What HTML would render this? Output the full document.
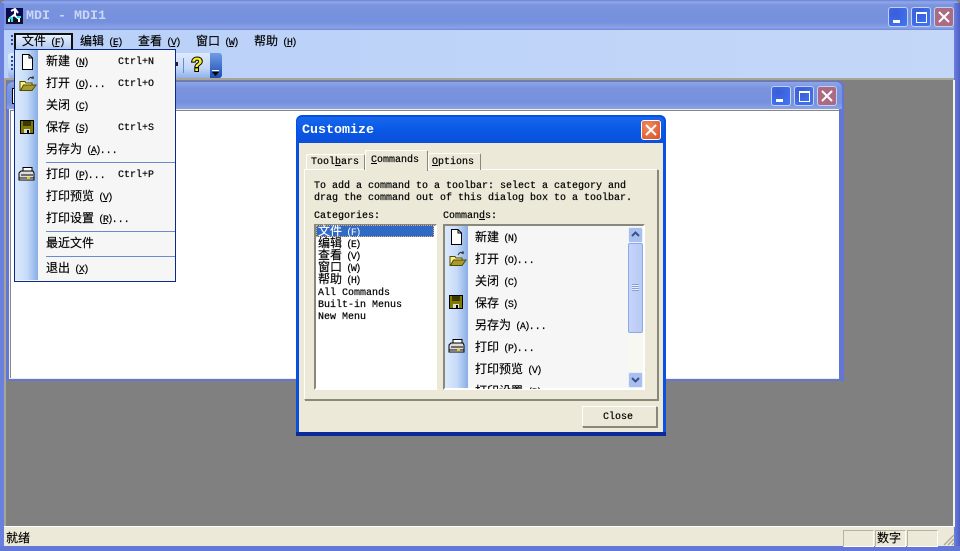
<!DOCTYPE html>
<html><head><meta charset="utf-8"><title>MDI</title>
<style>
html,body{margin:0;padding:0}
body{width:960px;height:551px;overflow:hidden;position:relative;background:#808080;font:10px/14px "Liberation Mono",monospace;color:#000;-webkit-text-stroke:.2px}
div,span,svg{position:absolute}
span{white-space:pre}
b{font:12px/14px "WenQuanYi Zen Hei","Noto Sans CJK SC",sans-serif;-webkit-text-stroke:.15px}
u{text-decoration:underline}
a{letter-spacing:-1.6px}
.t{font:bold 13.33px/14px "Liberation Mono",monospace;-webkit-text-stroke:0}
</style></head><body>
<svg width="0" height="0" style="position:absolute"><defs>
<g id="new"><path d="M3.5 .5H10L13.5 4V15.5H3.5Z" fill="#fff" stroke="#000"/><path d="M10 .5V4H13.5" fill="none" stroke="#000"/></g>
<g id="open"><path d="M1 5.500H6L7 7H13V14.500H1Z" fill="#ffef8a" stroke="#4f4a00"/><path d="M1.500 14.500L4.500 9H17L13 14.500Z" fill="#a89a2c" stroke="#4f4a00"/><path d="M9 4Q11 0 14 2M14 3V0M15 2H12" fill="none" stroke="#333"/></g>
<g id="save"><path d="M.5 .5H13.500V13.500H.5Z" fill="#807c00" stroke="#000"/><path d="M3 1H11V6H3Z" fill="#3a3800"/><path d="M4 9H10V13H4Z" fill="#ddd"/><path d="M7 10H9V13H7Z" fill="#000"/></g>
<g id="print"><path d="M5 .5H14V5H5Z" fill="#fff" stroke="#000"/><path d="M1 6L3 4H15L16 6V11H1Z" fill="#ddd" stroke="#000"/><path d="M1 11H16V13H1Z" fill="#fff" stroke="#000"/><path d="M3 8H15" stroke="#000"/><path d="M9 11H12" stroke="#e8d000" stroke-width="2"/></g>
</defs></svg>

<!-- main window frame -->
<div style="left:0;top:0;width:960px;height:551px;border-radius:7px 7px 0 0;background:#6a7edc"></div>
<div style="left:0;top:0;width:960px;height:30px;border-radius:7px 7px 0 0;background:linear-gradient(#6b80d8 0,#8fa8ea 2px,#7a94de 5px,#7590dd 22px,#8aa2e6 28px,#6f86dc 30px)"></div>
<div style="left:954px;top:3px;width:6px;height:548px;background:linear-gradient(90deg,#6a7edc,#4f5fc4)"></div>
<div style="left:0;top:3px;width:4px;height:548px;background:#6a80de"></div>
<div style="left:0;top:546px;width:960px;height:5px;background:#6377d8"></div>
<div style="left:5px;top:80px;width:949px;height:447px;background:#808080"></div>

<!-- app icon -->
<svg style="left:6px;top:8px" width="17" height="16"><rect width="17" height="16" fill="#0a0a50"/><rect y="8" width="17" height="8" fill="#101030"/><path d="M5 3L9 1L12 5M9 1V8M3 11L8 7L13 11M3 11V14M13 9V14" stroke="#fff" stroke-width="2" fill="none"/><path d="M3 10H6V14M11 9H15" stroke="#20e8e8" stroke-width="2" fill="none"/></svg>
<span class="t" style="left:26px;top:10px;color:#c9d6f6">MDI - MDI1</span>

<!-- window buttons -->
<div style="left:888px;top:7px;width:18px;height:18px;border:1px solid #c3d0f2;border-radius:3px;background:radial-gradient(circle at 35% 30%,#3a5cd8,#3f72ee 80%)"><div style="left:4px;top:12px;width:7px;height:3px;background:#fff"></div></div>
<div style="left:911px;top:7px;width:18px;height:18px;border:1px solid #c3d0f2;border-radius:3px;background:radial-gradient(circle at 35% 30%,#3a5cd8,#3f72ee 80%)"><div style="left:4px;top:4px;width:9px;height:8px;border:1px solid #fff;border-top:2px solid #fff"></div></div>
<div style="left:934px;top:7px;width:18px;height:18px;border:1px solid #c3d0f2;border-radius:3px;background:#ab6b83"><svg style="left:3px;top:3px" width="12" height="12"><path d="M1 1L11 11M11 1L1 11" stroke="#fff" stroke-width="2"/></svg></div>

<!-- menu/toolbar area -->
<div style="left:4px;top:30px;width:950px;height:49px;background:linear-gradient(90deg,#b9d0f8,#c3d7f8)"></div>
<div style="left:4px;top:78px;width:950px;height:2px;background:#a7a595"></div>
<div style="left:11px;top:35px;width:2px;height:12px;background:repeating-linear-gradient(#274a9a 0 2px,transparent 2px 4px)"></div>
<span style="left:80px;top:34px"><b>编辑</b><a> (<u>E</u>)</a></span>
<span style="left:138px;top:34px"><b>查看</b><a> (<u>V</u>)</a></span>
<span style="left:196px;top:34px"><b>窗口</b><a> (<u>W</u>)</a></span>
<span style="left:254px;top:34px"><b>帮助</b><a> (<u>H</u>)</a></span>

<div style="left:8px;top:53px;width:202px;height:25px;border-radius:3px 0 0 3px;background:linear-gradient(#dfeafc,#c3d7f8 60%,#8fb0ea)"></div>
<div style="left:11px;top:56px;width:2px;height:15px;background:repeating-linear-gradient(#274a9a 0 2px,transparent 2px 4px)"></div>
<div style="left:176px;top:62px;width:2px;height:4px;background:#222"></div>
<div style="left:183px;top:58px;width:1px;height:15px;background:#6a8ccc"></div>
<svg style="left:188px;top:55px" width="18" height="20"><text x="9" y="16" text-anchor="middle" font-family="Liberation Sans" font-weight="bold" font-size="19" fill="#f7ef20" stroke="#000" stroke-width="2" paint-order="stroke">?</text></svg>
<div style="left:210px;top:53px;width:12px;height:25px;border-radius:0 3px 3px 0;background:linear-gradient(#6f9ce6,#1e4cb0)"><div style="left:2px;top:17px;width:7px;height:1px;background:#fff"></div><svg style="left:2px;top:19px" width="7" height="4"><path d="M0 0H7L3.500 4Z" fill="#000"/></svg></div>

<!-- MDI area -->
<div style="left:4px;top:80px;width:2px;height:447px;background:#a7a595"></div>
<div style="left:953px;top:80px;width:2px;height:447px;background:#f4f2e6"></div>

<!-- MDI child -->
<div style="left:6px;top:81px;width:838px;height:300px;border-radius:6px 6px 0 0;background:#6376d8"></div>
<div style="left:7px;top:82px;width:835px;height:27px;border-radius:6px 6px 0 0;background:linear-gradient(#8ea6ea,#7b94df 6px,#7590dd 20px,#8aa2e6)"></div>
<div style="left:12px;top:88px;width:4px;height:14px;background:#fff;border:1px solid #000"></div>
<div style="left:9px;top:109px;width:830px;height:270px;background:#f0eee2"></div>
<div style="left:10px;top:110px;width:828px;height:267px;background:#fff;border-left:1px solid #888;border-top:1px solid #888"></div>
<div style="left:771px;top:86px;width:18px;height:18px;border:1px solid #c3d0f2;border-radius:3px;background:radial-gradient(circle at 35% 30%,#3a5cd8,#3f72ee 80%)"><div style="left:4px;top:12px;width:7px;height:3px;background:#fff"></div></div>
<div style="left:794px;top:86px;width:18px;height:18px;border:1px solid #c3d0f2;border-radius:3px;background:radial-gradient(circle at 35% 30%,#3a5cd8,#3f72ee 80%)"><div style="left:4px;top:4px;width:9px;height:8px;border:1px solid #fff;border-top:2px solid #fff"></div></div>
<div style="left:817px;top:86px;width:18px;height:18px;border:1px solid #c3d0f2;border-radius:3px;background:#ab6b83"><svg style="left:3px;top:3px" width="12" height="12"><path d="M1 1L11 11M11 1L1 11" stroke="#fff" stroke-width="2"/></svg></div>

<!-- status bar -->
<div style="left:4px;top:526px;width:950px;height:20px;background:#ece9d8;border-top:1px solid #fff;box-sizing:border-box"></div>
<span style="left:6px;top:531px"><b>就绪</b></span>
<div style="left:843px;top:530px;width:29px;height:15px;border:1px solid;border-color:#b5b2a2 #fff #fff #b5b2a2"></div>
<div style="left:875px;top:530px;width:29px;height:15px;border:1px solid;border-color:#b5b2a2 #fff #fff #b5b2a2"></div>
<span style="left:877px;top:531px"><b>数字</b></span>
<div style="left:907px;top:530px;width:29px;height:15px;border:1px solid;border-color:#b5b2a2 #fff #fff #b5b2a2"></div>
<svg style="left:943px;top:534px" width="12" height="12"><path d="M11 1L1 11M11 5L5 11M11 9L9 11" stroke="#aca899" stroke-width="1.300"/></svg>

<!-- Menu bar highlighted item -->
<div style="left:14px;top:33px;width:55px;height:16px;border:2px solid #111;border-bottom:0;background:linear-gradient(#e8f0fd,#a9c4f0)"></div>
<span style="left:22px;top:34px"><b>文件</b><a> (<u>F</u>)</a></span>

<!-- Drop menu -->
<div style="left:14px;top:49px;width:160px;height:231px;border:1px solid #0a2a8a;background:#f6f6f6"></div>
<div style="left:15px;top:50px;width:23px;height:230px;background:linear-gradient(90deg,#dbe9fc,#c8dcf8 50%,#88aee6)"></div>
<div style="left:46px;top:162px;width:129px;height:1px;background:#6a8ccc"></div>
<div style="left:46px;top:231px;width:129px;height:1px;background:#6a8ccc"></div>
<div style="left:46px;top:256px;width:129px;height:1px;background:#6a8ccc"></div>
<svg style="left:19px;top:54px" width="18" height="16"><use href="#new"/></svg>
<svg style="left:19px;top:76px" width="18" height="16"><use href="#open"/></svg>
<svg style="left:20px;top:120px" width="16" height="16"><use href="#save"/></svg>
<svg style="left:18px;top:167px" width="18" height="16"><use href="#print"/></svg>
<span style="left:46px;top:54px"><b>新建</b><a> (<u>N</u>)</a></span><span style="left:118px;top:56px">Ctrl+N</span>
<span style="left:46px;top:76px"><b>打开</b><a> (<u>O</u>)</a>...</span><span style="left:118px;top:78px">Ctrl+O</span>
<span style="left:46px;top:98px"><b>关闭</b><a> (<u>C</u>)</a></span>
<span style="left:46px;top:120px"><b>保存</b><a> (<u>S</u>)</a></span><span style="left:118px;top:122px">Ctrl+S</span>
<span style="left:46px;top:142px"><b>另存为</b><a> (<u>A</u>)</a>...</span>
<span style="left:46px;top:167px"><b>打印</b><a> (<u>P</u>)</a>...</span><span style="left:118px;top:169px">Ctrl+P</span>
<span style="left:46px;top:189px"><b>打印预览</b><a> (<u>V</u>)</a></span>
<span style="left:46px;top:211px"><b>打印设置</b><a> (<u>R</u>)</a>...</span>
<span style="left:46px;top:236px"><b>最近文件</b></span>
<span style="left:46px;top:261px"><b>退出</b><a> (<u>X</u>)</a></span>

<!-- Customize dialog -->
<div style="left:296px;top:115px;width:370px;height:321px;border-radius:6px 6px 0 0;background:linear-gradient(90deg,#0a4ee0,#0a50e4);"></div>
<div style="left:296px;top:432px;width:370px;height:4px;background:#0a2a9a"></div>
<div style="left:297px;top:117px;width:367px;height:26px;border-radius:5px 5px 0 0;background:linear-gradient(#1668ee,#0a58e4 50%,#0a50dc)"></div>
<span class="t" style="left:302px;top:124px;color:#fff">Customize</span>
<div style="left:641px;top:120px;width:18px;height:18px;border:1px solid #fff;border-radius:3px;background:radial-gradient(circle at 35% 30%,#f08a5c,#d8502a)"><svg style="left:3px;top:3px" width="12" height="12"><path d="M1 1L11 11M11 1L1 11" stroke="#fff" stroke-width="2"/></svg></div>
<div style="left:299px;top:143px;width:364px;height:289px;background:#ece9d8"></div>

<!-- tab panel -->
<div style="left:304px;top:169px;width:352px;height:229px;border:1px solid;border-color:#fff #8a887a #8a887a #fff;box-shadow:1px 1px 0 #8a887a"></div>
<div style="left:306px;top:154px;width:57px;height:15px;border:1px solid;border-color:#fff #8a887a transparent #fff;border-radius:2px 2px 0 0;border-bottom:0"></div>
<span style="left:311px;top:156px">Tool<u>b</u>ars</span>
<div style="left:428px;top:153px;width:51px;height:16px;border:1px solid;border-color:#fff #8a887a transparent #fff;border-radius:2px 2px 0 0;border-bottom:0"></div>
<span style="left:432px;top:156px"><u>O</u>ptions</span>
<div style="left:365px;top:150px;width:61px;height:20px;border:1px solid;border-color:#fff #8a887a transparent #fff;border-radius:2px 2px 0 0;border-bottom:0;background:#ece9d8"></div>
<span style="left:371px;top:154px"><u>C</u>ommands</span>

<span style="left:314px;top:180px">To add a command to a toolbar: select a category and</span>
<span style="left:314px;top:192px">drag the command out of this dialog box to a toolbar.</span>
<span style="left:314px;top:210px">Categories:</span>
<span style="left:443px;top:210px">Comman<u>d</u>s:</span>

<!-- categories list -->
<div style="left:314px;top:224px;width:119px;height:162px;border:2px solid;border-color:#8a887a #fff #fff #8a887a;background:#fff"></div>
<div style="left:316px;top:225px;width:118px;height:12px;background:#316ac5;outline:1px dotted #e8b060;outline-offset:-1px"></div>
<span style="left:318px;top:224px;color:#fff;-webkit-text-stroke:0"><b>文件</b><a> (F)</a></span>
<span style="left:318px;top:236px"><b>编辑</b><a> (E)</a></span>
<span style="left:318px;top:248px"><b>查看</b><a> (V)</a></span>
<span style="left:318px;top:260px"><b>窗口</b><a> (W)</a></span>
<span style="left:318px;top:272px"><b>帮助</b><a> (H)</a></span>
<span style="left:318px;top:287px">All Commands</span>
<span style="left:318px;top:299px">Built-in Menus</span>
<span style="left:318px;top:311px">New Menu</span>

<!-- commands list -->
<div style="left:443px;top:224px;width:198px;height:162px;border:2px solid;border-color:#8a887a #fff #fff #8a887a;background:#f6f6f6;overflow:hidden"></div>
<div style="left:445px;top:226px;width:23px;height:162px;background:linear-gradient(90deg,#dbe9fc,#c8dcf8 50%,#88aee6)"></div>
<svg style="left:448px;top:229px" width="18" height="16"><use href="#new"/></svg>
<svg style="left:449px;top:251px" width="18" height="16"><use href="#open"/></svg>
<svg style="left:449px;top:295px" width="16" height="16"><use href="#save"/></svg>
<svg style="left:448px;top:339px" width="18" height="16"><use href="#print"/></svg>
<span style="left:475px;top:230px"><b>新建</b><a> (N)</a></span>
<span style="left:475px;top:252px"><b>打开</b><a> (O)</a>...</span>
<span style="left:475px;top:274px"><b>关闭</b><a> (C)</a></span>
<span style="left:475px;top:296px"><b>保存</b><a> (S)</a></span>
<span style="left:475px;top:318px"><b>另存为</b><a> (A)</a>...</span>
<span style="left:475px;top:340px"><b>打印</b><a> (P)</a>...</span>
<span style="left:475px;top:362px"><b>打印预览</b><a> (V)</a></span>
<div style="left:475px;top:384px;width:150px;height:5px;overflow:hidden"><span style="left:0;top:0"><b>打印设置</b><a> (R)</a>...</span></div>

<!-- scrollbar -->
<div style="left:628px;top:226px;width:15px;height:162px;background:#f8f8f2"></div>
<div style="left:628px;top:227px;width:13px;height:14px;border:1px solid #e8eefc;border-radius:2px;background:#a9bff0"><svg style="left:2px;top:3px" width="9" height="7"><path d="M1 5L4.500 1.500L8 5" stroke="#3a5080" stroke-width="2" fill="none"/></svg></div>
<div style="left:628px;top:243px;width:13px;height:88px;border:1px solid #8fa8ea;border-radius:2px;background:linear-gradient(90deg,#c5d4f8,#b8caf6)"><div style="left:3px;top:40px;width:7px;height:7px;background:repeating-linear-gradient(#8aa0d8 0 1px,#e8eefc 1px 2px)"></div></div>
<div style="left:628px;top:372px;width:13px;height:14px;border:1px solid #e8eefc;border-radius:2px;background:#a9bff0"><svg style="left:2px;top:3px" width="9" height="7"><path d="M1 2L4.500 5.500L8 2" stroke="#3a5080" stroke-width="2" fill="none"/></svg></div>

<!-- close button -->
<div style="left:582px;top:406px;width:73px;height:19px;border:1px solid;border-color:#fff #8a887a #8a887a #fff;box-shadow:1px 1px 0 #8a887a;background:#ece9d8"></div>
<span style="left:603px;top:411px">Close</span>
</body></html>
